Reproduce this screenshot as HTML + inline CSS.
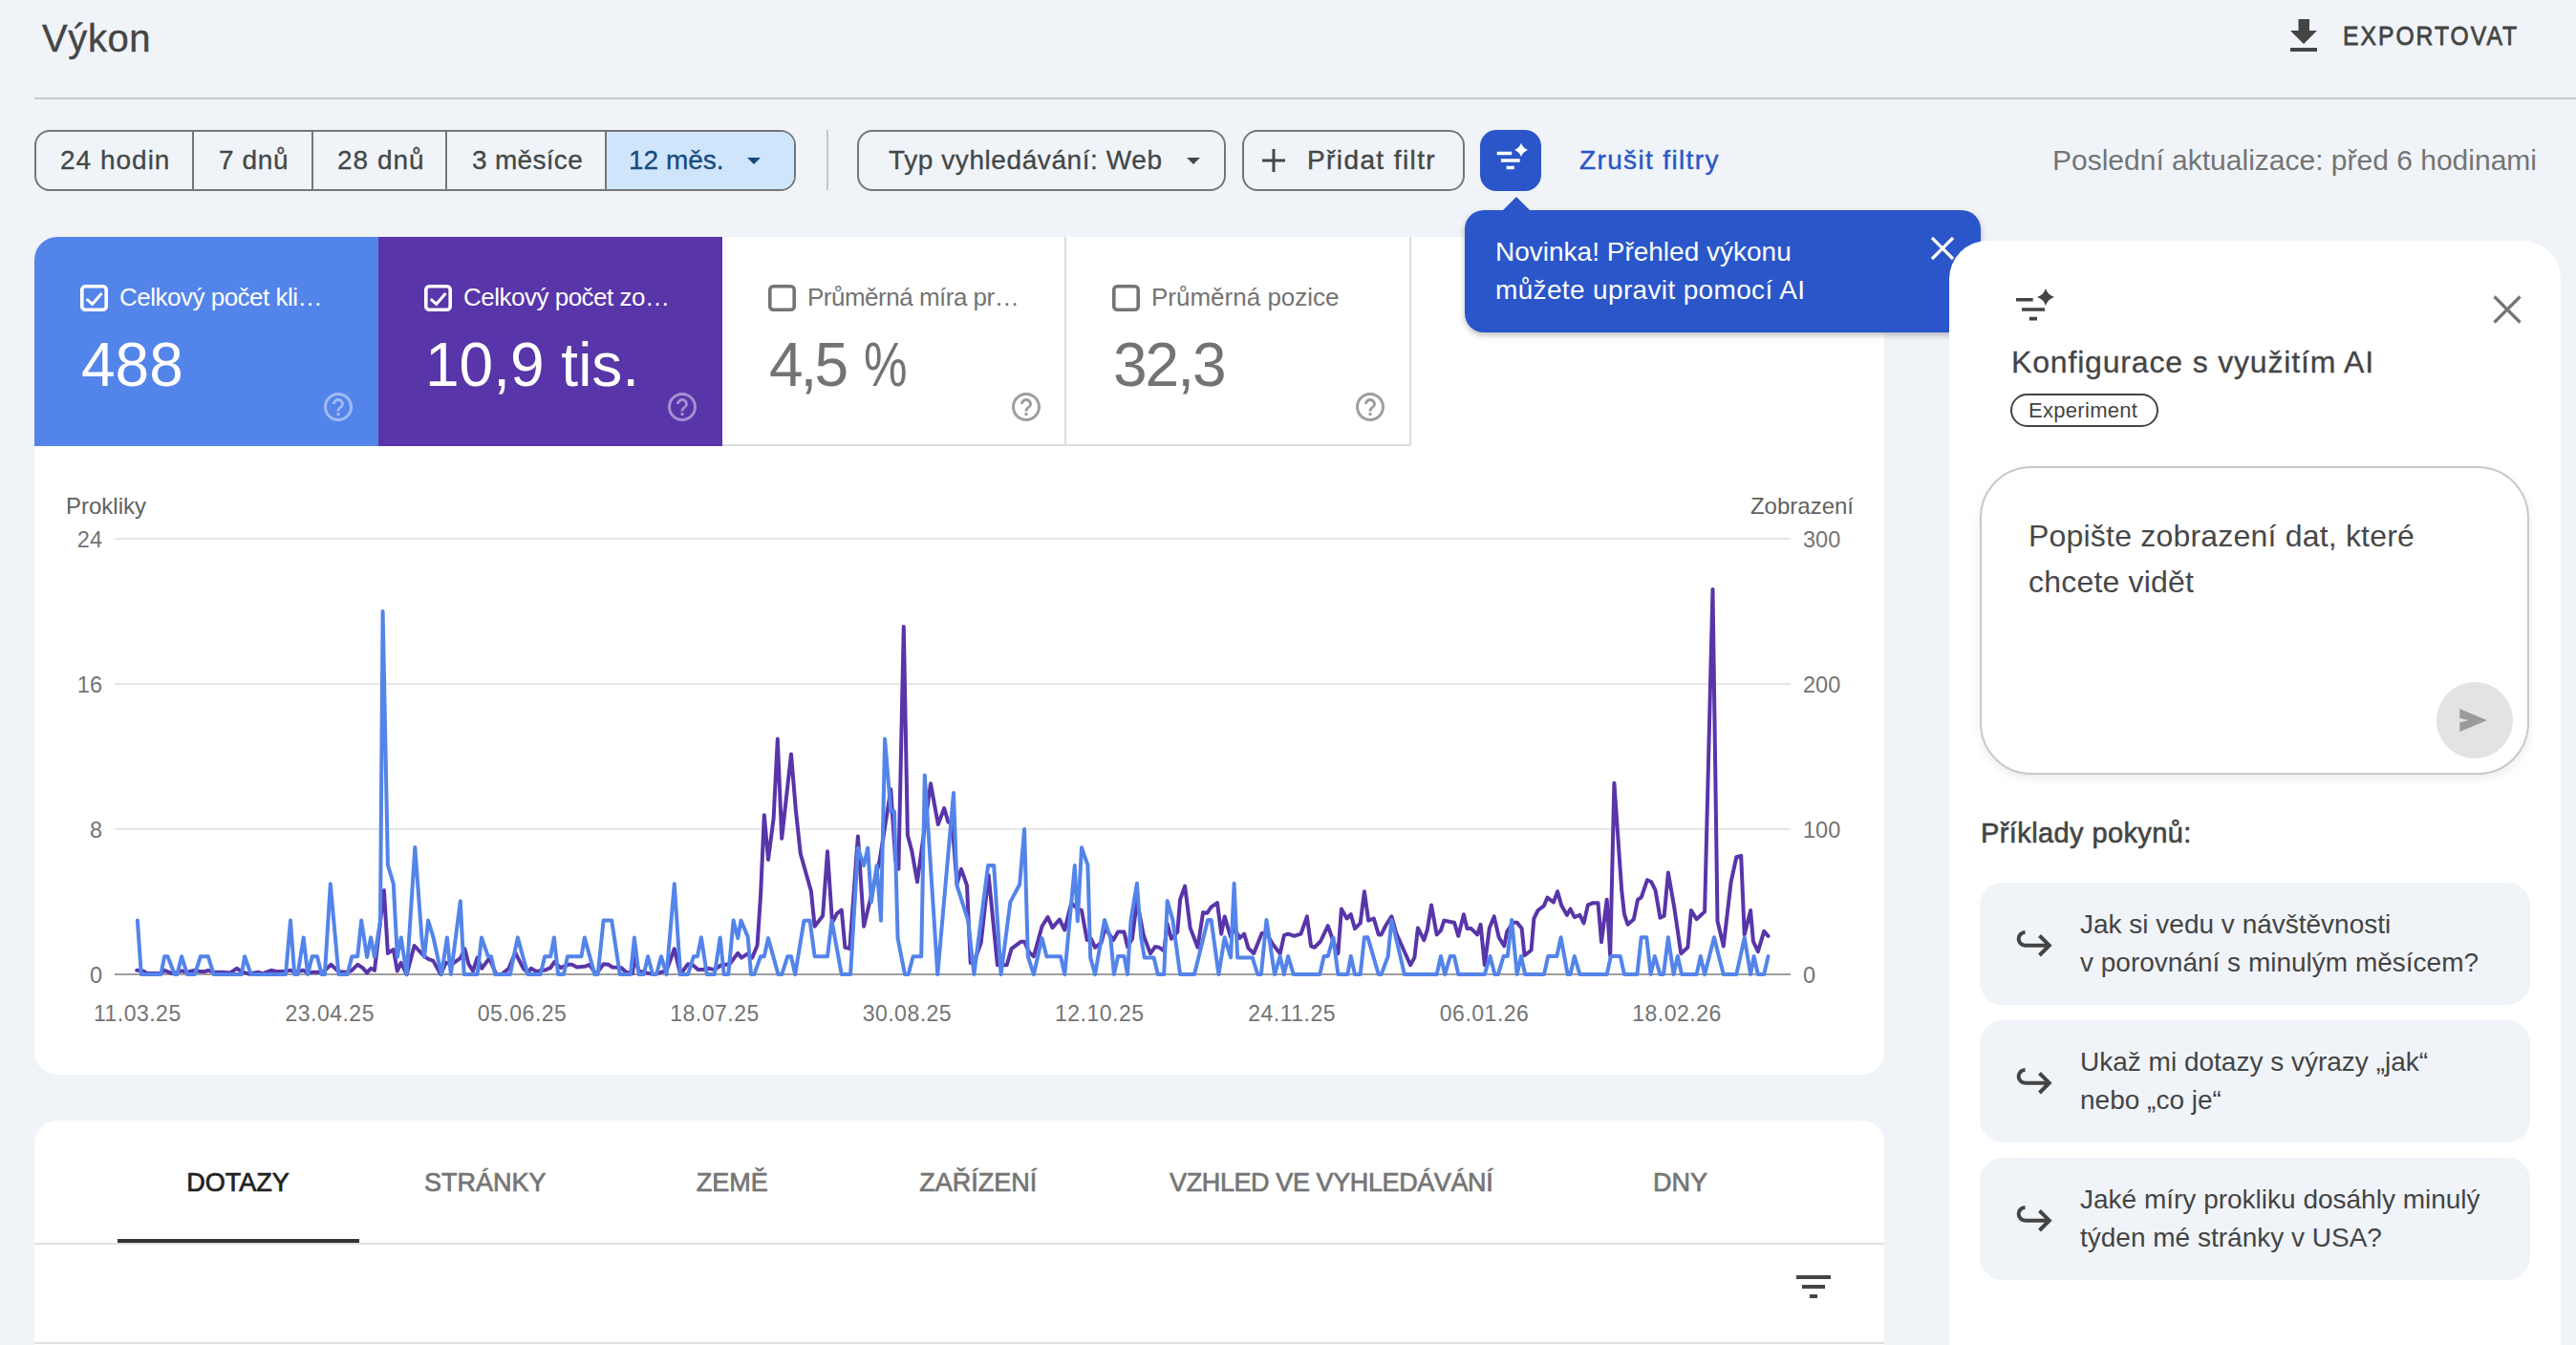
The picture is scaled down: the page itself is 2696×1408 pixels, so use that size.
<!DOCTYPE html>
<html><head><meta charset="utf-8">
<style>
html,body{margin:0;padding:0;}
body{width:2696px;height:1408px;overflow:hidden;background:#f0f4f9;position:relative;font-family:"Liberation Sans",sans-serif;color:#444746;}
.a{position:absolute;white-space:nowrap;line-height:1;}
.card{position:absolute;background:#fff;}
.seg{position:absolute;top:0;height:100%;border-left:2px solid #747775;}
</style></head><body>

<!-- header -->
<div class="a" id="title" style="left:44px;top:20px;font-size:40px;color:#454545;letter-spacing:0.6px;-webkit-text-stroke:0.4px #454545;">Výkon</div>
<svg class="a" style="left:2397px;top:20px;" width="28" height="34" viewBox="0 0 28 34"><path d="M8.5 0h11.5v12h8l-14 14l-14-14h8.5z" fill="#444"/><rect x="0" y="30" width="28" height="4" fill="#444"/></svg>
<div class="a" id="export" style="left:2452px;top:24px;font-size:28px;color:#444;letter-spacing:2.3px;-webkit-text-stroke:0.8px #444;transform:scaleX(0.88);transform-origin:0 0;">EXPORTOVAT</div>
<div class="a" style="left:36px;top:102px;width:2660px;height:2px;background:#c7c9ca;"></div>

<!-- date range group -->
<div class="a" style="left:36px;top:136px;width:793px;height:60px;border:2px solid #747775;border-radius:16px;overflow:hidden;">
  <div class="seg" style="left:163px;"></div>
  <div class="seg" style="left:288px;"></div>
  <div class="seg" style="left:428px;"></div>
  <div class="seg" style="left:595px;width:200px;background:#cfe5fb;"></div>
</div>
<div class="a" id="t24" style="left:63px;top:154px;font-size:28px;letter-spacing:1px;-webkit-text-stroke:0.3px #444746;">24 hodin</div>
<div class="a" style="left:229px;top:154px;font-size:28px;letter-spacing:0.6px;-webkit-text-stroke:0.3px #444746;">7 dnů</div>
<div class="a" style="left:353px;top:154px;font-size:28px;letter-spacing:1px;-webkit-text-stroke:0.3px #444746;">28 dnů</div>
<div class="a" style="left:494px;top:154px;font-size:28px;letter-spacing:0.3px;-webkit-text-stroke:0.3px #444746;">3 měsíce</div>
<div class="a" style="left:658px;top:154px;font-size:28px;color:#174a7e;-webkit-text-stroke:0.3px #174a7e;">12 měs.</div>
<svg class="a" style="left:782px;top:165px;" width="14" height="7"><path d="M0 0h14l-7 7z" fill="#174a7e"/></svg>
<div class="a" style="left:865px;top:136px;width:2px;height:63px;background:#c7c9ca;"></div>

<div class="a" style="left:897px;top:136px;width:382px;height:60px;border:2px solid #747775;border-radius:16px;"></div>
<div class="a" style="left:930px;top:154px;font-size:28px;letter-spacing:0.58px;-webkit-text-stroke:0.3px #444746;">Typ vyhledávání: Web</div>
<svg class="a" style="left:1242px;top:165px;" width="14" height="7"><path d="M0 0h14l-7 7z" fill="#444746"/></svg>

<div class="a" style="left:1300px;top:136px;width:229px;height:60px;border:2px solid #747775;border-radius:16px;"></div>
<svg class="a" style="left:1321px;top:156px;" width="24" height="24"><path d="M12 0v24M0 12h24" stroke="#444746" stroke-width="3"/></svg>
<div class="a" style="left:1368px;top:154px;font-size:28px;letter-spacing:1.4px;-webkit-text-stroke:0.4px #444746;">Přidat filtr</div>

<div class="a" style="left:1549px;top:136px;width:64px;height:64px;border-radius:17px;background:#2a56c9;"></div>
<svg class="a" style="left:1566px;top:148px;" width="36" height="32" viewBox="0 0 36 32"><path d="M0.7 12.5h15.5M4.9 20h19.8M10.6 27.5h8.2" stroke="#fff" stroke-width="3.3"/><path d="M26 1.8Q27.9 7.1 33 9Q27.9 10.9 26 16.2Q24.1 10.9 19 9Q24.1 7.1 26 1.8Z" fill="#fff"/></svg>
<div class="a" style="left:1653px;top:154px;font-size:28px;color:#2a56c9;letter-spacing:1.36px;-webkit-text-stroke:0.4px #2a56c9;">Zrušit filtry</div>

<div class="a" id="posl" style="left:2148px;top:153px;font-size:30px;color:#747474;">Poslední aktualizace: před 6 hodinami</div>

<!-- chart card -->
<div class="card" style="left:36px;top:248px;width:1936px;height:877px;border-radius:24px;overflow:hidden;">
  <div class="a" style="left:0;top:0;width:360px;height:219px;background:#5384ea;"></div>
  <div class="a" style="left:360px;top:0;width:360px;height:219px;background:#5835a9;"></div>
  <div class="a" style="left:720px;top:0;width:719px;height:217px;border-bottom:2px solid #dcdcdc;border-right:2px solid #dcdcdc;"></div>
  <div class="a" style="left:1078px;top:0;width:2px;height:217px;background:#dcdcdc;"></div>
</div>

<!-- chart content -->
<div class="a" style="left:120px;top:562.8px;width:1754px;height:2px;background:#e6e6e6;"></div>
<div class="a" style="left:0;width:107px;text-align:right;top:553.8px;font-size:23.5px;color:#737373;">24</div>
<div class="a" style="left:1887px;top:553.8px;font-size:23.5px;color:#737373;">300</div>
<div class="a" style="left:120px;top:714.9px;width:1754px;height:2px;background:#e6e6e6;"></div>
<div class="a" style="left:0;width:107px;text-align:right;top:705.9px;font-size:23.5px;color:#737373;">16</div>
<div class="a" style="left:1887px;top:705.9px;font-size:23.5px;color:#737373;">200</div>
<div class="a" style="left:120px;top:867.0px;width:1754px;height:2px;background:#e6e6e6;"></div>
<div class="a" style="left:0;width:107px;text-align:right;top:858.0px;font-size:23.5px;color:#737373;">8</div>
<div class="a" style="left:1887px;top:858.0px;font-size:23.5px;color:#737373;">100</div>
<div class="a" style="left:120px;top:1019.1px;width:1754px;height:2px;background:#9e9e9e;"></div>
<div class="a" style="left:0;width:107px;text-align:right;top:1010.1px;font-size:23.5px;color:#737373;">0</div>
<div class="a" style="left:1887px;top:1010.1px;font-size:23.5px;color:#737373;">0</div>
<div class="a" id="prok" style="left:69px;top:518.1px;font-size:24px;color:#616161;">Prokliky</div>
<div class="a" id="zobr" style="left:1740px;width:200px;text-align:right;top:518.1px;font-size:24px;color:#616161;">Zobrazení</div>
<div class="a" style="left:43.8px;width:200px;text-align:center;top:1050.4px;font-size:23px;color:#737373;letter-spacing:0.5px;">11.03.25</div>
<div class="a" style="left:245.2px;width:200px;text-align:center;top:1050.4px;font-size:23px;color:#737373;letter-spacing:0.5px;">23.04.25</div>
<div class="a" style="left:446.6px;width:200px;text-align:center;top:1050.4px;font-size:23px;color:#737373;letter-spacing:0.5px;">05.06.25</div>
<div class="a" style="left:648.0px;width:200px;text-align:center;top:1050.4px;font-size:23px;color:#737373;letter-spacing:0.5px;">18.07.25</div>
<div class="a" style="left:849.4px;width:200px;text-align:center;top:1050.4px;font-size:23px;color:#737373;letter-spacing:0.5px;">30.08.25</div>
<div class="a" style="left:1050.8px;width:200px;text-align:center;top:1050.4px;font-size:23px;color:#737373;letter-spacing:0.5px;">12.10.25</div>
<div class="a" style="left:1252.2px;width:200px;text-align:center;top:1050.4px;font-size:23px;color:#737373;letter-spacing:0.5px;">24.11.25</div>
<div class="a" style="left:1453.6px;width:200px;text-align:center;top:1050.4px;font-size:23px;color:#737373;letter-spacing:0.5px;">06.01.26</div>
<div class="a" style="left:1655.0px;width:200px;text-align:center;top:1050.4px;font-size:23px;color:#737373;letter-spacing:0.5px;">18.02.26</div>
<svg class="a" style="left:0;top:0;" width="2696" height="1408"><path d="M143.2 1015.8 L149.8 1016.4 L154.4 1019.1 L168.3 1019.1 L172.2 1015.8 L180.2 1019.1 L190.1 1016.4 L196.0 1017.7 L203.9 1015.8 L209.2 1017.1 L214.5 1017.1 L217.8 1015.8 L223.7 1017.7 L233.0 1017.7 L240.9 1018.4 L248.1 1013.8 L252.8 1017.1 L260.7 1019.7 L269.9 1017.7 L275.2 1019.1 L283.8 1015.8 L289.7 1017.1 L297.6 1017.1 L304.2 1015.8 L308.2 1017.7 L317.4 1015.8 L322.1 1018.4 L326.7 1017.7 L332.0 1017.7 L337.9 1017.7 L346.5 1009.8 L354.4 1017.1 L362.3 1017.7 L367.6 1016.4 L374.2 1009.8 L379.5 1013.1 L384.1 1018.4 L388.1 1013.8 L392.0 1015.8 L401.9 931.9 L405.9 997.9 L411.8 994.0 L415.8 1016.4 L419.7 1007.8 L425.7 1020.1 L433.6 990.0 L444.1 1001.2 L448.1 1003.9 L453.4 1005.9 L461.3 1020.1 L466.6 1007.8 L473.2 1009.2 L481.8 1003.2 L486.4 993.3 L490.4 1009.2 L495.0 1016.4 L499.6 1002.6 L504.2 1013.8 L512.1 1003.2 L519.4 1020.1 L524.7 1020.1 L532.6 1013.8 L539.2 997.3 L547.8 1013.8 L552.4 1018.4 L555.7 1013.8 L561.6 1017.1 L565.6 1015.8 L569.6 1015.8 L576.2 1013.1 L580.1 1007.2 L586.7 1013.1 L594.6 1009.8 L598.6 1009.8 L603.9 1012.5 L611.8 1011.8 L617.1 1009.8 L623.7 1020.1 L631.6 1009.2 L636.9 1009.8 L640.8 1012.5 L650.1 1013.1 L655.4 1017.7 L662.0 1019.1 L663.9 1002.6 L668.6 1016.4 L676.5 1018.4 L684.4 1020.1 L690.3 1018.4 L697.6 1015.8 L705.8 993.3 L712.1 1020.1 L720.0 1009.2 L725.3 1010.5 L730.6 1015.1 L735.2 1015.1 L741.2 1013.8 L747.8 1015.1 L754.4 1010.5 L763.6 1009.2 L772.2 997.9 L776.1 1002.6 L782.1 998.6 L787.3 1002.6 L792.6 989.4 L796.1 936.7 L799.8 853.3 L804.0 899.9 L809.6 857.0 L813.8 773.6 L818.2 877.8 L828.0 789.5 L832.9 848.4 L837.8 893.8 L848.9 933.0 L852.6 969.8 L861.1 958.8 L866.0 891.3 L871.0 966.2 L875.9 956.3 L880.8 952.7 L884.4 991.9 L889.3 993.1 L897.9 875.4 L904.1 969.8 L920.7 900.4 L932.3 826.3 L937.2 901.2 L940.4 909.7 L945.8 656.1 L949.9 874.2 L954.4 891.3 L960.0 923.2 L974.0 820.2 L981.8 863.1 L988.2 846.0 L992.4 860.7 L996.5 860.7 L1001.5 925.7 L1005.9 909.7 L1012.0 926.9 L1015.7 1007.9 L1021.8 1000.5 L1026.7 987.0 L1034.6 915.9 L1043.9 1010.3 L1053.7 1010.3 L1058.6 993.1 L1068.4 985.8 L1072.1 985.8 L1077.0 996.8 L1081.9 1001.2 L1090.5 969.8 L1096.6 960.0 L1101.5 971.1 L1108.9 962.5 L1114.3 973.5 L1121.2 945.3 L1127.8 951.6 L1132.0 953.0 L1137.7 984.1 L1141.9 982.7 L1146.1 991.8 L1152.5 986.9 L1156.7 971.4 L1165.2 984.1 L1170.1 975.6 L1176.5 975.6 L1180.0 991.1 L1185.0 982.7 L1189.9 943.1 L1197.0 979.8 L1204.0 998.2 L1209.0 991.1 L1213.2 991.8 L1218.2 995.4 L1221.7 967.1 L1225.9 982.7 L1232.3 975.6 L1235.1 941.7 L1240.1 927.6 L1245.7 971.4 L1253.5 991.8 L1259.1 955.1 L1263.4 955.8 L1267.6 949.5 L1274.0 945.2 L1278.2 977.7 L1281.7 959.4 L1288.1 981.3 L1291.6 970.7 L1297.3 982.0 L1302.2 977.7 L1306.5 992.6 L1312.1 998.2 L1320.6 977.0 L1325.5 977.0 L1331.9 988.3 L1339.7 998.2 L1343.9 979.1 L1348.1 977.7 L1354.5 979.8 L1361.5 977.7 L1367.9 959.4 L1372.1 990.4 L1375.7 991.8 L1382.0 985.5 L1389.8 969.2 L1395.4 985.5 L1400.4 998.2 L1403.9 951.6 L1409.6 961.5 L1413.8 957.2 L1418.0 972.1 L1423.7 966.4 L1427.9 933.2 L1432.2 963.6 L1437.8 961.5 L1442.8 978.4 L1445.6 978.4 L1450.5 968.5 L1456.4 959.4 L1461.3 977.0 L1467.0 989.7 L1476.1 1010.2 L1480.4 1002.4 L1483.9 971.4 L1490.3 984.1 L1493.8 973.5 L1498.0 947.4 L1503.7 978.4 L1507.9 974.2 L1511.4 963.6 L1517.8 965.0 L1522.0 965.7 L1526.3 979.8 L1531.9 957.2 L1535.5 972.1 L1539.7 972.1 L1546.1 978.4 L1549.6 967.8 L1553.8 1010.2 L1558.8 971.4 L1563.7 959.4 L1568.7 981.3 L1574.3 990.4 L1577.1 975.6 L1583.5 965.7 L1587.7 965.7 L1592.7 972.1 L1595.5 1000.3 L1602.6 994.7 L1605.4 961.5 L1609.6 953.0 L1616.0 948.1 L1619.5 939.6 L1625.9 944.5 L1630.1 933.2 L1634.3 948.1 L1640.0 957.9 L1643.5 951.6 L1647.8 960.1 L1653.4 957.9 L1657.6 966.4 L1661.9 947.4 L1667.5 945.2 L1672.5 945.2 L1676.0 986.2 L1681.7 941.7 L1685.2 1000.3 L1689.4 819.7 L1697.2 931.8 L1700.0 957.2 L1703.6 967.8 L1709.9 962.2 L1714.1 941.7 L1717.7 939.6 L1724.0 921.2 L1728.3 923.3 L1732.5 931.8 L1737.5 960.8 L1741.7 958.7 L1745.9 913.5 L1752.3 950.2 L1759.3 998.2 L1766.4 991.8 L1769.9 953.0 L1775.6 962.2 L1784.1 954.4 L1792.5 616.9 L1797.5 964.3 L1803.8 990.5 L1811.6 923.4 L1817.3 897.2 L1822.2 895.8 L1825.7 978.5 L1832.1 953.0 L1834.9 985.5 L1839.9 996.1 L1846.2 974.9 L1850.5 979.9" fill="none" stroke="#5835a9" stroke-width="4" stroke-linejoin="round" stroke-linecap="round"/><path d="M143.9 963.6 L147.8 1020.1 L168.3 1020.1 L172.2 1001.2 L175.5 1001.2 L182.8 1020.1 L185.4 1020.1 L190.1 1001.2 L196.0 1020.1 L203.9 1020.1 L209.9 1001.2 L217.8 1001.2 L223.7 1020.1 L252.8 1020.1 L256.1 1001.2 L262.7 1020.1 L299.0 1020.1 L304.0 963.6 L308.2 1020.1 L311.5 1020.1 L317.7 981.4 L322.1 1020.1 L326.7 1001.2 L332.0 1001.2 L336.6 1020.1 L339.9 1020.1 L345.8 925.3 L354.4 1020.1 L363.6 1020.1 L368.3 1001.2 L374.2 1001.2 L378.2 963.6 L384.1 1001.9 L388.1 981.4 L392.0 1001.9 L398.0 964.3 L400.6 640.0 L405.9 905.5 L411.8 925.3 L415.8 1001.9 L419.7 981.4 L425.7 1020.1 L434.3 887.1 L441.5 982.8 L444.1 1001.9 L448.1 963.6 L453.4 980.8 L462.0 1020.1 L467.9 981.4 L471.9 1020.1 L481.8 943.2 L485.7 1020.1 L499.6 1020.1 L504.0 981.4 L510.8 1001.2 L514.1 1001.2 L518.1 1020.1 L533.9 1020.1 L541.8 981.4 L552.4 1020.1 L565.6 1020.1 L570.2 1001.2 L576.2 1001.2 L579.9 981.4 L584.1 1020.1 L590.0 1020.1 L594.0 1001.2 L608.5 1001.2 L611.8 981.4 L622.4 1020.1 L625.7 1020.1 L631.6 963.6 L640.2 963.6 L648.8 1020.1 L660.0 1020.1 L663.9 981.4 L668.6 1020.1 L673.8 1020.1 L678.1 1001.2 L683.1 1020.1 L687.0 1020.1 L692.0 1001.2 L697.6 1020.1 L705.8 925.3 L712.1 1020.1 L720.0 1020.1 L726.0 1001.2 L729.9 1001.2 L733.9 981.4 L739.8 1020.1 L747.8 1020.1 L753.7 981.4 L757.7 1020.1 L762.3 1020.1 L767.6 963.6 L772.2 982.1 L775.5 963.6 L782.7 980.8 L786.0 1020.1 L789.3 1020.1 L796.1 1001.2 L799.8 1001.2 L804.0 982.1 L814.5 1020.1 L818.2 1020.1 L824.3 1001.2 L828.0 1001.2 L832.2 1020.1 L841.5 963.7 L847.6 963.7 L852.6 1001.2 L866.0 1001.2 L870.5 963.7 L880.8 1020.1 L890.1 1020.1 L897.9 887.7 L904.1 906.1 L908.2 887.7 L911.9 944.1 L917.6 906.1 L922.0 963.7 L926.1 773.6 L932.3 849.6 L936.0 849.6 L939.6 982.1 L947.0 1020.1 L950.7 1020.1 L955.6 1001.2 L964.2 1001.2 L967.8 811.6 L981.3 1020.1 L998.0 830.0 L1001.5 926.9 L1013.2 963.7 L1019.4 1020.1 L1034.1 906.1 L1040.2 906.1 L1047.6 1020.1 L1057.4 944.1 L1067.2 925.7 L1072.1 868.0 L1075.8 1001.2 L1081.9 1020.1 L1090.5 982.1 L1095.4 1001.2 L1110.1 1001.2 L1114.3 1020.1 L1124.8 906.1 L1127.8 964.3 L1132.0 887.3 L1138.4 905.7 L1141.2 1002.4 L1146.1 1020.1 L1156.0 962.9 L1162.4 982.7 L1165.9 1020.1 L1170.1 1001.0 L1176.5 1001.0 L1180.0 1020.1 L1183.6 962.9 L1189.9 924.8 L1194.2 981.3 L1197.7 1002.4 L1207.6 1002.4 L1211.8 1020.1 L1218.2 1020.1 L1221.7 943.1 L1227.4 962.9 L1235.1 1020.1 L1250.0 1020.1 L1264.1 962.9 L1267.6 962.9 L1275.4 1020.1 L1281.7 981.3 L1288.1 1002.4 L1291.6 924.8 L1295.2 1002.4 L1310.7 1002.4 L1316.3 1020.1 L1319.9 1020.1 L1325.5 962.9 L1334.0 1020.1 L1339.7 1001.0 L1343.9 1020.1 L1348.1 1001.0 L1353.8 1020.1 L1381.3 1020.1 L1385.6 1001.0 L1389.8 1001.0 L1395.4 981.3 L1400.4 1020.1 L1410.3 1020.1 L1413.8 1001.0 L1418.0 1020.1 L1423.7 1020.1 L1427.9 981.3 L1431.5 981.3 L1442.8 1020.1 L1445.6 1020.1 L1452.7 1001.0 L1456.4 962.9 L1465.5 1001.0 L1469.8 1020.1 L1503.7 1020.1 L1507.9 1001.0 L1512.2 1020.1 L1517.8 1001.0 L1522.0 1001.0 L1526.3 1020.1 L1553.8 1020.1 L1559.5 1001.0 L1564.4 1020.1 L1567.9 1020.1 L1573.6 1001.0 L1577.8 1001.0 L1582.1 962.9 L1587.7 1020.1 L1592.0 1001.0 L1596.2 1020.1 L1616.0 1020.1 L1620.2 1001.0 L1629.4 1001.0 L1633.6 981.3 L1640.7 1020.1 L1643.5 1020.1 L1647.8 1001.0 L1653.4 1020.1 L1681.7 1020.1 L1685.9 1001.0 L1695.8 1001.0 L1700.0 1020.1 L1713.4 1020.1 L1717.7 981.3 L1723.3 981.3 L1727.6 1020.1 L1731.8 1001.0 L1737.5 1020.1 L1741.0 1020.1 L1745.9 981.3 L1751.6 1020.1 L1755.8 1001.0 L1760.1 1020.1 L1775.6 1020.1 L1779.8 1001.0 L1784.1 1020.1 L1789.0 1001.1 L1794.0 981.3 L1798.9 1001.1 L1803.8 1020.1 L1817.3 1020.1 L1821.5 1001.1 L1825.7 981.3 L1832.1 1020.1 L1835.6 1001.1 L1839.9 1020.1 L1846.2 1020.1 L1850.5 1001.1" fill="none" stroke="#5384ea" stroke-width="4" stroke-linejoin="round" stroke-linecap="round"/></svg>

<!-- metric content -->
<svg class="a" style="left:84px;top:298px;" width="29" height="28" viewBox="0 0 29 28"><rect x="1.8" y="1.8" width="25.4" height="24.4" rx="3.5" fill="none" stroke="#fff" stroke-width="3.6"/><path d="M6.7 15.1l6 5.2l9.8-11.4" fill="none" stroke="#fff" stroke-width="3"/></svg>
<div class="a" id="lab0" style="letter-spacing:-0.5px;left:125px;top:298px;font-size:26px;color:#fff;">Celkový počet kli…</div>
<div class="a" id="val0" style="left:85px;top:350px;font-size:64px;color:#fff;">488</div>
<svg class="a" style="left:336px;top:408px;" width="36" height="36" viewBox="0 0 24 24"><path d="M11 18h2v-2h-2v2zm1-16C6.48 2 2 6.48 2 12s4.48 10 10 10 10-4.48 10-10S17.52 2 12 2zm0 18c-4.41 0-8-3.59-8-8s3.59-8 8-8 8 3.59 8 8-3.59 8-8 8zm0-14c-2.21 0-4 1.79-4 4h2c0-1.1.9-2 2-2s2 .9 2 2c0 2-3 1.75-3 5h2c0-2.25 3-2.5 3-5 0-2.21-1.79-4-4-4z" fill="rgba(255,255,255,.45)"/></svg>
<svg class="a" style="left:444px;top:298px;" width="29" height="28" viewBox="0 0 29 28"><rect x="1.8" y="1.8" width="25.4" height="24.4" rx="3.5" fill="none" stroke="#fff" stroke-width="3.6"/><path d="M6.7 15.1l6 5.2l9.8-11.4" fill="none" stroke="#fff" stroke-width="3"/></svg>
<div class="a" id="lab1" style="letter-spacing:-0.5px;left:485px;top:298px;font-size:26px;color:#fff;">Celkový počet zo…</div>
<div class="a" id="val1" style="left:445px;top:350px;font-size:64px;color:#fff;">10,9 tis.</div>
<svg class="a" style="left:696px;top:408px;" width="36" height="36" viewBox="0 0 24 24"><path d="M11 18h2v-2h-2v2zm1-16C6.48 2 2 6.48 2 12s4.48 10 10 10 10-4.48 10-10S17.52 2 12 2zm0 18c-4.41 0-8-3.59-8-8s3.59-8 8-8 8 3.59 8 8-3.59 8-8 8zm0-14c-2.21 0-4 1.79-4 4h2c0-1.1.9-2 2-2s2 .9 2 2c0 2-3 1.75-3 5h2c0-2.25 3-2.5 3-5 0-2.21-1.79-4-4-4z" fill="rgba(255,255,255,.45)"/></svg>
<svg class="a" style="left:804px;top:298px;" width="29" height="28" viewBox="0 0 29 28"><rect x="1.8" y="1.8" width="25.4" height="24.4" rx="3.5" fill="none" stroke="#757575" stroke-width="3.6"/></svg>
<div class="a" id="lab2" style="letter-spacing:-0.5px;left:845px;top:298px;font-size:26px;color:#737373;">Průměrná míra pr…</div>
<div class="a" id="val2" style="letter-spacing:-3px;left:805px;top:350px;font-size:64px;color:#737373;">4,5</div>
<div class="a" id="val2b" style="left:904px;top:350px;font-size:64px;color:#737373;transform:scaleX(0.8);transform-origin:0 0;">%</div>
<svg class="a" style="left:1056px;top:408px;" width="36" height="36" viewBox="0 0 24 24"><path d="M11 18h2v-2h-2v2zm1-16C6.48 2 2 6.48 2 12s4.48 10 10 10 10-4.48 10-10S17.52 2 12 2zm0 18c-4.41 0-8-3.59-8-8s3.59-8 8-8 8 3.59 8 8-3.59 8-8 8zm0-14c-2.21 0-4 1.79-4 4h2c0-1.1.9-2 2-2s2 .9 2 2c0 2-3 1.75-3 5h2c0-2.25 3-2.5 3-5 0-2.21-1.79-4-4-4z" fill="#9e9e9e"/></svg>
<svg class="a" style="left:1164px;top:298px;" width="29" height="28" viewBox="0 0 29 28"><rect x="1.8" y="1.8" width="25.4" height="24.4" rx="3.5" fill="none" stroke="#757575" stroke-width="3.6"/></svg>
<div class="a" id="lab3" style="left:1205px;top:298px;font-size:26px;color:#737373;">Průměrná pozice</div>
<div class="a" id="val3" style="letter-spacing:-2px;left:1165px;top:350px;font-size:64px;color:#737373;">32,3</div>
<svg class="a" style="left:1416px;top:408px;" width="36" height="36" viewBox="0 0 24 24"><path d="M11 18h2v-2h-2v2zm1-16C6.48 2 2 6.48 2 12s4.48 10 10 10 10-4.48 10-10S17.52 2 12 2zm0 18c-4.41 0-8-3.59-8-8s3.59-8 8-8 8 3.59 8 8-3.59 8-8 8zm0-14c-2.21 0-4 1.79-4 4h2c0-1.1.9-2 2-2s2 .9 2 2c0 2-3 1.75-3 5h2c0-2.25 3-2.5 3-5 0-2.21-1.79-4-4-4z" fill="#9e9e9e"/></svg>

<!-- tabs card -->
<div class="card" style="left:36px;top:1173px;width:1936px;height:300px;border-radius:24px;"></div>

<!-- tabs content -->
<div class="a" id="tab0" style="left:-1.0px;width:500px;text-align:center;top:1225.0px;font-size:27px;color:#212121;-webkit-text-stroke:0.7px #212121;">DOTAZY</div>
<div class="a" id="tab1" style="left:257.8px;width:500px;text-align:center;top:1225.0px;font-size:27px;color:#757575;-webkit-text-stroke:0.7px #757575;">STRÁNKY</div>
<div class="a" id="tab2" style="left:516.3px;width:500px;text-align:center;top:1225.0px;font-size:27px;color:#757575;-webkit-text-stroke:0.7px #757575;">ZEMĚ</div>
<div class="a" id="tab3" style="left:773.7px;width:500px;text-align:center;top:1225.0px;font-size:27px;color:#757575;-webkit-text-stroke:0.7px #757575;">ZAŘÍZENÍ</div>
<div class="a" id="tab4" style="letter-spacing:-0.4px;left:1143.2px;width:500px;text-align:center;top:1225.0px;font-size:27px;color:#757575;-webkit-text-stroke:0.7px #757575;">VZHLED VE VYHLEDÁVÁNÍ</div>
<div class="a" id="tab5" style="left:1508.5px;width:500px;text-align:center;top:1225.0px;font-size:27px;color:#757575;-webkit-text-stroke:0.7px #757575;">DNY</div>
<div class="a" style="left:123px;top:1297px;width:253px;height:4px;background:#333;"></div>
<div class="a" style="left:36px;top:1301px;width:1936px;height:2px;background:#e0e0e0;"></div>
<svg class="a" style="left:1880px;top:1335px;" width="36" height="24"><path d="M0 0h36v4H0zM6 10h24v4H6zM14 20h8v4h-8z" fill="#444"/></svg>
<div class="a" style="left:36px;top:1405px;width:1936px;height:2px;background:#e0e0e0;"></div>

<!-- tooltip -->
<div class="a" style="left:1533px;top:220px;width:540px;height:128px;border-radius:20px;background:#2a56c9;box-shadow:0 3px 6px rgba(0,0,0,.25);"></div>
<svg class="a" style="left:1572px;top:205px;" width="30" height="16"><path d="M0 16L15 1L30 16z" fill="#2a56c9"/></svg>

<div class="a" id="tt1" style="left:1565px;top:250.0px;font-size:28px;color:#fff;">Novinka! Přehled výkonu</div>
<div class="a" id="tt2" style="left:1565px;top:290.3px;font-size:28px;color:#fff;letter-spacing:0.35px;">můžete upravit pomocí AI</div>
<svg class="a" style="left:2020px;top:247px;" width="26" height="26"><path d="M2 2L24 24M24 2L2 24" stroke="#fff" stroke-width="3.2"/></svg>

<!-- AI panel -->
<div class="card" style="left:2040px;top:252px;width:640px;height:1200px;border-radius:40px;"></div>

<!-- panel content -->
<svg class="a" style="left:2108px;top:300px;" width="44" height="38" viewBox="0 0 44 38"><path d="M2 13.7h17.7M8 24h24M15.8 33.6h8.2" stroke="#444" stroke-width="3.6"/><path d="M33 2Q35.2 8.8 42 11Q35.2 13.2 33 20Q30.8 13.2 24 11Q30.8 8.8 33 2Z" fill="#444"/></svg>
<svg class="a" style="left:2609px;top:309px;" width="30" height="30"><path d="M1.5 1.5L28.5 28.5M28.5 1.5L1.5 28.5" stroke="#757575" stroke-width="3.2"/></svg>
<div class="a" id="ptitle" style="left:2105px;top:363px;font-size:32px;color:#444;letter-spacing:0.83px;-webkit-text-stroke:0.3px #444;">Konfigurace s využitím AI</div>
<div class="a" style="left:2104px;top:412px;width:151px;height:31px;border:2px solid #444;border-radius:18px;"></div>
<div class="a" id="exp" style="left:2123px;top:419.3px;font-size:22px;letter-spacing:0.3px;color:#444;">Experiment</div>
<div class="a" style="left:2072px;top:488px;width:571px;height:319px;border:2px solid #c8c9c9;border-radius:54px;box-shadow:0 4px 10px rgba(0,0,0,.08);background:#fff;"></div>
<div class="a" id="ph" style="left:2123px;top:536.6px;letter-spacing:0.2px;font-size:32px;line-height:48px;color:#474747;">Popište zobrazení dat, které<br>chcete vidět</div>
<div class="a" style="left:2550px;top:714px;width:80px;height:80px;border-radius:40px;background:#e3e3e3;"></div>
<svg class="a" style="left:0;top:0;" width="2696" height="1408"><path d="M2574.3 741.9L2602.9 754L2574.3 766L2574.3 756.2L2583.7 754L2574.3 751.7Z" fill="#9a9a9a"/></svg>
<div class="a" id="prik" style="left:2073px;top:858.1px;letter-spacing:0.4px;font-size:29px;color:#444;-webkit-text-stroke:0.6px #444;">Příklady pokynů:</div>
<div class="a" style="left:2072px;top:924px;width:576px;height:128px;border-radius:24px;background:#f0f4f9;"></div>
<svg class="a" style="left:2100px;top:924px;" width="60" height="128"><path d="M19.5 52A6.85 6.85 0 0 0 19.5 65.7H44M34.5 55.5L44.8 65.7L34.5 76" fill="none" stroke="#444" stroke-width="4"/></svg>
<div class="a" id="ex0" style="left:2177px;top:948.1px;font-size:28px;line-height:40px;color:#444;">Jak si vedu v návštěvnosti<br>v porovnání s minulým měsícem?</div>
<div class="a" style="left:2072px;top:1068px;width:576px;height:128px;border-radius:24px;background:#f0f4f9;"></div>
<svg class="a" style="left:2100px;top:1068px;" width="60" height="128"><path d="M19.5 52A6.85 6.85 0 0 0 19.5 65.7H44M34.5 55.5L44.8 65.7L34.5 76" fill="none" stroke="#444" stroke-width="4"/></svg>
<div class="a" id="ex1" style="left:2177px;top:1092.1px;font-size:28px;line-height:40px;color:#444;">Ukaž mi dotazy s výrazy „jak“<br>nebo „co je“</div>
<div class="a" style="left:2072px;top:1212px;width:576px;height:128px;border-radius:24px;background:#f0f4f9;"></div>
<svg class="a" style="left:2100px;top:1212px;" width="60" height="128"><path d="M19.5 52A6.85 6.85 0 0 0 19.5 65.7H44M34.5 55.5L44.8 65.7L34.5 76" fill="none" stroke="#444" stroke-width="4"/></svg>
<div class="a" id="ex2" style="left:2177px;top:1236.1px;font-size:28px;line-height:40px;color:#444;">Jaké míry prokliku dosáhly minulý<br>týden mé stránky v USA?</div>

</body></html>
